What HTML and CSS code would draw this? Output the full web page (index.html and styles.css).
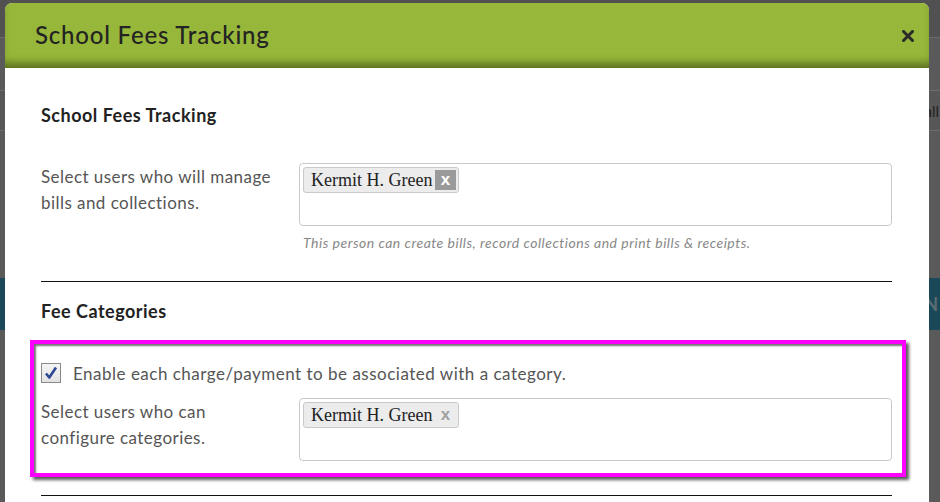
FILE: index.html
```html
<!DOCTYPE html>
<html>
<head>
<meta charset="utf-8">
<link rel="stylesheet" href="styles.css">
</head>
<body>
<div class="page">
  <div class="topbar"></div>
  <div class="band b1"></div>
  <div class="band b2"><span class="all">all</span></div>
  <div class="band b3"></div>
  <div class="teal"><span class="tealtext">N</span></div>
  <div class="band b4"></div>
</div>

<div class="modal">
  <div class="modal-header">
    <h2 class="modal-title">School Fees Tracking</h2>
    <svg class="close" width="12" height="12" viewBox="0 0 12 12"><path d="M1.5 1.5 L10.5 10.5 M10.5 1.5 L1.5 10.5" stroke="#2a2a2a" stroke-width="3" stroke-linecap="square"/></svg>
  </div>
  <div class="modal-body">
    <h3 class="section-title first">School Fees Tracking</h3>
    <div class="field">
      <div class="label">Select users who will manage bills and collections.</div>
      <div class="control">
        <div class="select-box">
          <span class="chip">Kermit H. Green<span class="chip-x dark">x</span></span>
        </div>
        <div class="help">This person can create bills, record collections and print bills &amp; receipts.</div>
      </div>
    </div>
    <hr class="rule">
    <h3 class="section-title">Fee Categories</h3>
    <div class="highlight">
      <label class="check-row">
        <span class="checkbox"><svg width="16" height="16" viewBox="0 0 16 16"><path d="M3 8.5 L6.3 12.5 L13 2.5" fill="none" stroke="#2c4894" stroke-width="2.6" stroke-linejoin="round"/></svg></span>
        <span class="check-text">Enable each charge/payment to be associated with a category.</span>
      </label>
      <div class="field second">
        <div class="label">Select users who can configure categories.</div>
        <div class="control">
          <div class="select-box">
            <span class="chip">Kermit H. Green<span class="chip-x light">x</span></span>
          </div>
        </div>
      </div>
    </div>
    <hr class="rule last">
  </div>
</div>
</body>
</html>
```

FILE: styles.css
```css
html, body {
  margin: 0;
  padding: 0;
}
body {
  width: 940px;
  height: 502px;
  overflow: hidden;
  background: #5a5a5a;
  font-family: "Lato", "Open Sans", sans-serif;
  position: relative;
}
.page {
  display: flex;
  flex-direction: column;
}
.topbar {
  height: 37px;
  background: #515151;
  border-bottom: 1px solid #6a6a6a;
}
.band {
  background: #5a5a5a;
}
.b1 {
  height: 52px;
  border-bottom: 1px solid #6c6c6c;
}
.b2 {
  height: 39px;
  border-bottom: 1px solid #6c6c6c;
  display: flex;
  justify-content: flex-end;
  align-items: center;
  background: #575757;
}
.all {
  font-size: 15px;
  color: #1f1f1f;
  margin-right: 1px;
}
.b3 {
  height: 147px;
}
.teal {
  height: 52px;
  background: #1a4858;
  display: flex;
  justify-content: flex-end;
  align-items: center;
}
.tealtext {
  color: #5b6d73;
  font-size: 18px;
  font-weight: bold;
  margin-right: 2px;
}
.b4 {
  height: 200px;
}

.modal {
  position: absolute;
  left: 5px;
  top: 3px;
  width: 924px;
  height: 560px;
  background: #fff;
  border-radius: 7px 7px 0 0;
  overflow: hidden;
}
.modal-header {
  height: 65px;
  background: #97b73a;
  box-shadow: inset 0 -9px 8px -4px rgba(40, 50, 10, 0.55);
  display: flex;
  align-items: center;
  justify-content: space-between;
  padding: 0 15px 0 30px;
}
.modal-title {
  margin: 0;
  font-size: 24px;
  font-weight: 500;
  color: #232323;
  letter-spacing: 0.8px;
  padding-bottom: 3px;
}
.close {
  display: block;
  margin-top: 1px;
}
.modal-body {
  padding: 0 37px 0 36px;
}
.section-title {
  margin: 0;
  font-size: 18px;
  line-height: 20px;
  font-weight: bold;
  color: #222;
  letter-spacing: 0.5px;
}
.section-title.first {
  margin-top: 37px;
  margin-bottom: 38px;
}
.field {
  display: flex;
}
.label {
  width: 258px;
  flex: none;
  font-size: 17px;
  line-height: 26px;
  color: #555;
  letter-spacing: 0.45px;
  padding-top: 1px;
  padding-right: 16px;
  box-sizing: border-box;
}
.control {
  flex: 1;
}
.select-box {
  height: 63px;
  box-sizing: border-box;
  border: 1px solid #c8c8c8;
  border-radius: 4px;
  padding: 3px;
}
.chip {
  display: inline-flex;
  align-items: center;
  height: 26px;
  width: 156px;
  box-sizing: border-box;
  border: 1px solid #c9c9c9;
  border-radius: 3px;
  background: #ececec;
  font-family: "Liberation Serif", serif;
  font-size: 18px;
  color: #222;
  padding-left: 7px;
  padding-right: 2px;
  justify-content: space-between;
}
.chip-x {
  display: inline-flex;
  width: 21px;
  height: 20px;
  align-items: center;
  justify-content: center;
  font-family: "Liberation Sans", sans-serif;
  font-weight: bold;
  font-size: 17px;
  line-height: 1;
  padding-bottom: 2px;
  box-sizing: border-box;
}
.chip-x.dark {
  background: #9a9a9a;
  color: #fff;
}
.chip-x.light {
  color: #a0a0a0;
}
.help {
  margin-top: 9px;
  padding-left: 4px;
  font-size: 14px;
  line-height: 16px;
  font-style: italic;
  color: #888;
  letter-spacing: 0.5px;
}
.rule {
  margin: 30px 0 0 0;
  border: 0;
  border-top: 1px solid #111;
  height: 0;
}
.rule + .section-title {
  margin-top: 19px;
  margin-bottom: 19px;
}
.rule.last {
  margin-top: 18px;
}
.highlight {
  margin: 0 -14px 0 -11px;
  border: 4px solid #ff00ff;
  padding: 18px 10px 12px 7px;
  box-shadow: 3px 3px 3px rgba(0, 0, 0, 0.65), inset 2px 2px 2px rgba(0, 0, 0, 0.55);
}
.check-row {
  display: flex;
  align-items: center;
  height: 22px;
}
.checkbox {
  width: 18px;
  height: 18px;
  border: 1px solid #8a8a8a;
  background: linear-gradient(#f4f4f4, #e2e2e2);
  display: flex;
  align-items: center;
  justify-content: center;
  flex: none;
}
.check-text {
  margin-left: 12px;
  font-size: 17px;
  color: #555;
  letter-spacing: 0.5px;
}
.field.second {
  margin-top: 14px;
}
.field.second .label {
  padding-top: 1px;
}
```
